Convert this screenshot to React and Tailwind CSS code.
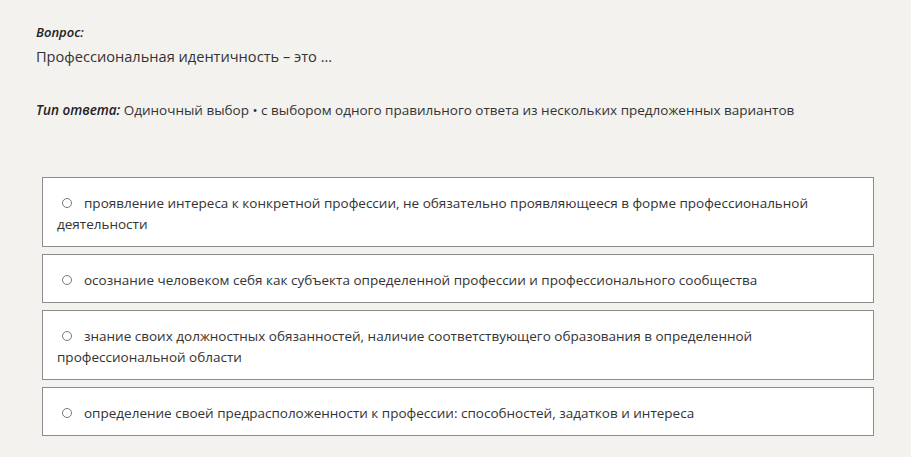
import React from "react";

const options = [
  "проявление интереса к конкретной профессии, не обязательно проявляющееся в форме профессиональной деятельности",
  "осознание человеком себя как субъекта определенной профессии и профессионального сообщества",
  "знание своих должностных обязанностей, наличие соответствующего образования в определенной профессиональной области",
  "определение своей предрасположенности к профессии: способностей, задатков и интереса",
];

const App = () => {
  return (
    <div
      className="min-h-screen bg-[#f3f2ef] text-[#333] pt-[24px] pl-[36px] pr-[37px]"
      style={{ fontFamily: '"Open Sans", "Noto Sans", sans-serif' }}
    >
      <div className="text-[13px] leading-[17px] font-semibold italic text-[#222]">Вопрос:</div>
      <div className="text-[14.6px] leading-[22px] mt-[4px] text-[#333]">
        Профессиональная идентичность – это ...
      </div>

      <div className="mt-[34px] text-[13.5px] leading-[18px] text-[#333]">
        <span className="font-semibold italic text-[#222]">Тип ответа:</span> Одиночный выбор • с выбором
        одного правильного ответа из нескольких предложенных вариантов
      </div>

      <div className="mt-[58px] ml-[6px] flex flex-col gap-[7px]">
        {options.map((text) => (
          <div
            key={text}
            className="bg-white border border-[#8c8c8c] pl-[14px] pr-[40px] pt-[15px] pb-[11px] text-[13.5px] leading-[21px] text-[#333]"
          >
            <span className="inline-block align-middle w-[10px] h-[10px] rounded-full border border-[#777] ml-[5px] mr-[12px] -mt-[2px]"></span>
            {text}
          </div>
        ))}
      </div>
    </div>
  );
};

export default App;
